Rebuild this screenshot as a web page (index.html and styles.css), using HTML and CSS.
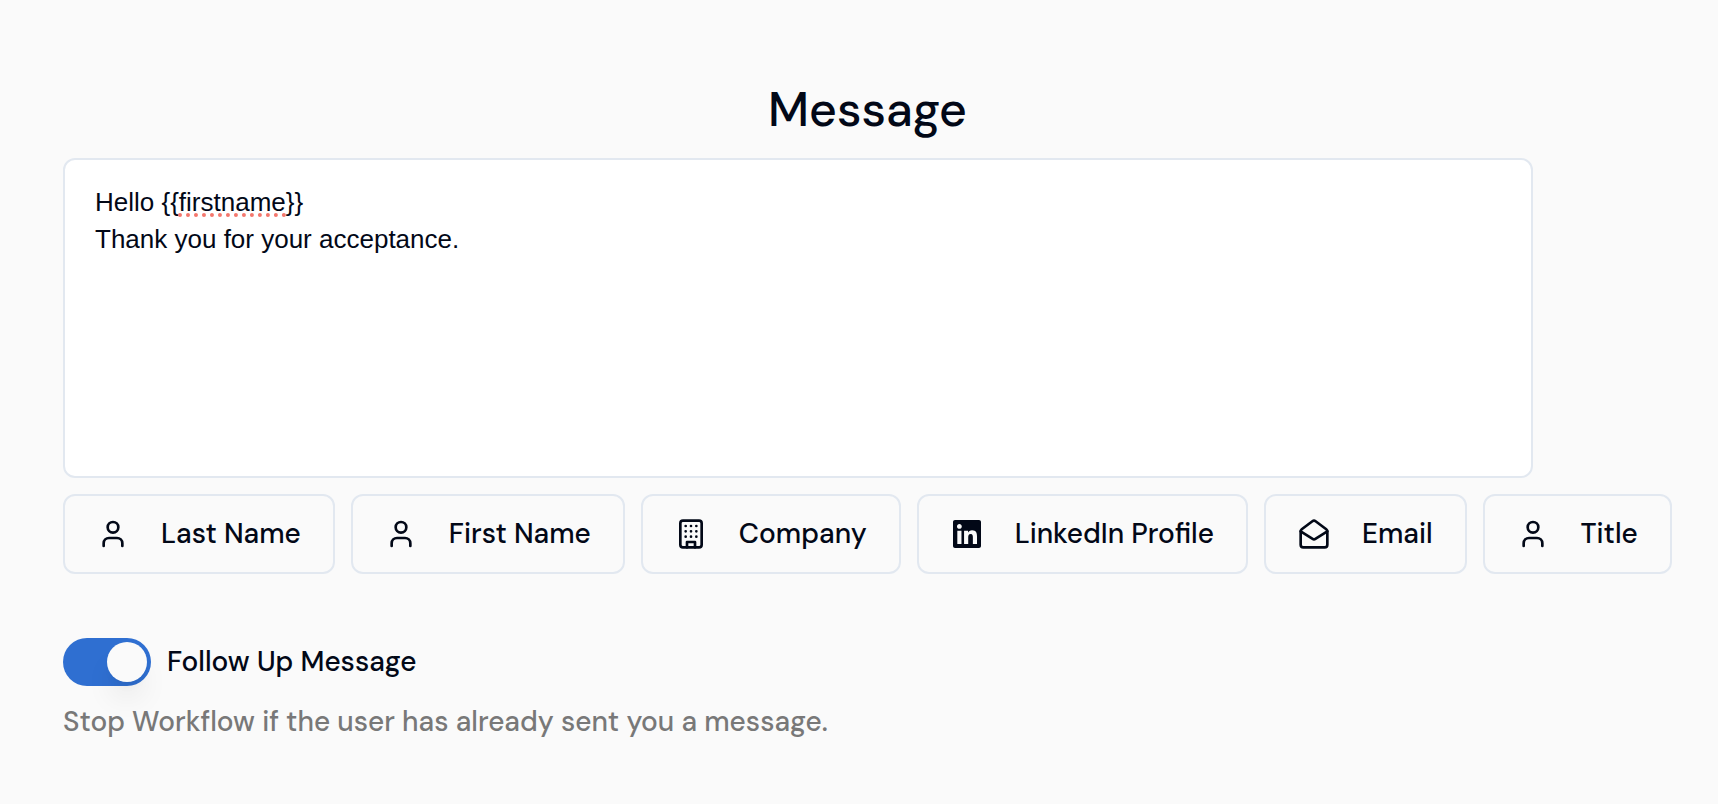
FILE: index.html
```
<!DOCTYPE html>
<html lang="en">

<head>
  <meta charset="utf-8">
  <title>Message</title>
  <meta name="viewport" content="width=device-width, initial-scale=1">
  <link rel="stylesheet" href="styles.css">
</head>

<body>
<svg width="0" height="0" class="sprite" aria-hidden="true">
  <symbol id="icon-user" viewBox="0 0 24 24">
    <path d="M19 21v-2a4 4 0 0 0-4-4H9a4 4 0 0 0-4 4v2"/>
    <circle cx="12" cy="7" r="4"/>
  </symbol>
</svg>

<main class="page">
  <h1 class="title"><label for="message">Message</label></h1>

  <div class="editor">
    <textarea id="message" class="editor__input" spellcheck="false">Hello {{firstname}}
Thank you for your acceptance.</textarea>
    <span class="editor__spelling"></span>
  </div>

  <div class="fields">
    <button type="button" class="field">
      <svg class="icon"><use href="#icon-user"/></svg>
      Last Name
    </button>
    <button type="button" class="field">
      <svg class="icon"><use href="#icon-user"/></svg>
      First Name
    </button>
    <button type="button" class="field">
      <svg class="icon" viewBox="0 0 24 24">
        <rect width="16" height="20" x="4" y="2" rx="2"/>
        <path d="M9 22v-4h6v4M8 6h.01M16 6h.01M12 6h.01M12 10h.01M12 14h.01M16 10h.01M16 14h.01M8 10h.01M8 14h.01"/>
      </svg>
      Company
    </button>
    <button type="button" class="field">
      <svg class="icon icon_solid" viewBox="0 0 448 512">
        <path d="M416 32H31.9C14.3 32 0 46.5 0 64.3v383.4C0 465.5 14.3 480 31.9 480H416c17.6 0 32-14.5 32-32.3V64.3c0-17.8-14.4-32.3-32-32.3zM135.4 416H69V202.2h66.5V416zm-33.2-243c-21.3 0-38.5-17.3-38.5-38.5S80.9 96 102.2 96c21.2 0 38.5 17.3 38.5 38.5 0 21.3-17.2 38.5-38.5 38.5zm282.1 243h-66.4V312c0-24.8-.5-56.7-34.5-56.7-34.6 0-39.9 27-39.9 54.9V416h-66.4V202.2h63.7v29.2h.9c8.9-16.8 30.6-34.5 62.9-34.5 67.2 0 79.7 44.3 79.7 101.9V416z"/>
      </svg>
      LinkedIn Profile
    </button>
    <button type="button" class="field">
      <svg class="icon" viewBox="0 0 24 24">
        <path d="M21.2 8.4c.5.38.8.97.8 1.6v10a2 2 0 0 1-2 2H4a2 2 0 0 1-2-2V10a2 2 0 0 1 .8-1.6l8-6a2 2 0 0 1 2.4 0l8 6Z"/>
        <path d="m22 10-8.97 5.7a1.94 1.94 0 0 1-2.06 0L2 10"/>
      </svg>
      Email
    </button>
    <button type="button" class="field">
      <svg class="icon"><use href="#icon-user"/></svg>
      Title
    </button>
  </div>

  <div class="follow">
    <input type="checkbox" role="switch" id="follow-up" class="switch" aria-describedby="follow-hint" checked>
    <label for="follow-up">Follow Up Message</label>
  </div>
  <p id="follow-hint" class="hint">Stop Workflow if the user has already sent you a message.</p>
</main>
</body>

</html>
```
FILE: styles.css
```
* {
  box-sizing: border-box;
}

body {
  margin: 0;
  background: #fafafa;
  color: #020817;
  font-family: "DM Sans", "Open Sans", sans-serif;
  font-size: 28px;
  font-weight: 500;
  line-height: 40px;
}

.sprite {
  position: absolute;
}

.page {
  padding: 78px 46px 62px 63px;
}

.title {
  margin: 0 0 16px;
  font-size: 48px;
  font-weight: 500;
  line-height: 64px;
  text-align: center;
}

.editor {
  position: relative;
  max-width: 1470px;
}

.editor__input {
  display: block;
  width: 100%;
  height: 320px;
  padding: 24px 30px;
  border: 2px solid #e2e8f0;
  border-radius: 12px;
  background: #fff;
  color: inherit;
  font-family: "Helvetica Neue", Helvetica, "Liberation Sans", Arial, sans-serif;
  font-size: 26px;
  font-weight: 400;
  line-height: 37px;
  resize: none;
}

/* dotted line under the unknown word */
.editor__spelling {
  position: absolute;
  left: 115px;
  top: 55px;
  width: 108px;
  border-bottom: 4px dotted #f4776d;
  pointer-events: none;
}

.fields {
  display: flex;
  flex-wrap: wrap;
  gap: 16px;
  margin: 16px 0 64px;
}

.field {
  display: flex;
  align-items: center;
  gap: 32px;
  height: 80px;
  padding: 0 32px;
  border: 2px solid #e2e8f0;
  border-radius: 12px;
  background: transparent;
  color: inherit;
  font: inherit;
  white-space: nowrap;
  cursor: pointer;
}

.icon {
  flex: none;
  width: 32px;
  height: 32px;
  fill: none;
  stroke: currentColor;
  stroke-width: 2;
  stroke-linecap: round;
  stroke-linejoin: round;
}

.icon_solid {
  fill: currentColor;
  stroke: none;
}

.follow {
  display: flex;
  align-items: center;
  gap: 16px;
}

.switch {
  appearance: none;
  display: flex;
  width: 88px;
  height: 48px;
  margin: 0;
  padding: 4px;
  border-radius: 24px;
  background: #2f6fd1;
  cursor: pointer;
}

.switch::before {
  content: "";
  width: 40px;
  height: 40px;
  border-radius: 50%;
  background: #fafafa;
  box-shadow: 0 20px 30px -6px rgba(0, 0, 0, 0.1), 0 8px 12px -8px rgba(0, 0, 0, 0.1);
}

.switch:checked::before {
  margin-left: auto;
}

.hint {
  margin: 16px 0 0;
  color: #787878;
}
```
